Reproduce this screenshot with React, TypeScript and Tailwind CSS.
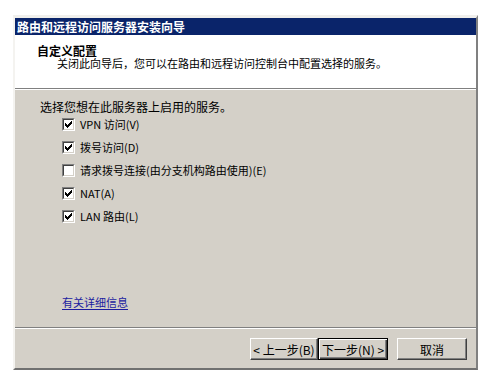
import React from "react";

const FONT = { fontFamily: '"Noto Sans CJK SC", "Noto Sans", sans-serif' };

function Check({ checked }: { checked: boolean }) {
  const cols = [2, 3, 4, 3, 2, 1, 0];
  return (
    <div className="w-[13px] h-[13px] shrink-0 border border-t-[#808080] border-l-[#808080] border-r-white border-b-white">
      <div className="w-[11px] h-[11px] border border-t-[#404040] border-l-[#404040] border-r-[#d4d0c8] border-b-[#d4d0c8] bg-white">
        {checked && (
          <svg width="9" height="9" viewBox="0 0 9 9" shapeRendering="crispEdges" className="block">
            {cols.map((y, i) => (
              <rect key={i} x={i + 1} y={y + 1} width={1} height={3} fill="#000" />
            ))}
          </svg>
        )}
      </div>
    </div>
  );
}

function Row({ checked, label }: { checked: boolean; label: string }) {
  return (
    <div className="h-[23px] flex items-center gap-[5px] pl-[47px]">
      <Check checked={checked} />
      <span className="text-[11px] leading-[13px] text-black whitespace-nowrap">{label}</span>
    </div>
  );
}

export default function App() {
  return (
    <div className="w-[500px] h-[388px] bg-white overflow-hidden pt-[15px]" style={FONT}>
      <div className="ml-[13px] w-[465px] h-[355px] flex flex-col border-l-2 border-t-[3px] border-r-2 border-b-2 border-l-[#f4f3f0] border-t-[#f0efec] border-r-[#808080] border-b-[#707070] bg-[#d4d0c8]">
        <div className="h-[17px] shrink-0 bg-[#0a246a] flex items-center pl-[2px]">
          <span className="text-white font-bold text-[12px] leading-[13px] whitespace-nowrap">路由和远程访问服务器安装向导</span>
        </div>
        <div className="h-[53px] shrink-0 bg-white pt-[9px] flex flex-col">
          <div className="pl-[22px] h-[13px] flex items-center text-[12px] font-bold text-black">自定义配置</div>
          <div className="pl-[42px] h-[13px] flex items-center text-[11px] text-black whitespace-nowrap">
            关闭此向导后，您可以在路由和远程访问控制台中配置选择的服务。
          </div>
        </div>
        <div className="h-px bg-[#808080] shrink-0" />
        <div className="h-px bg-white shrink-0" />
        <div className="h-[237px] shrink-0 pt-[11px]">
          <div className="pl-[25px] text-[12px] leading-[12px] text-black whitespace-nowrap">
            选择您想在此服务器上启用的服务。
          </div>
          <Row checked label="VPN 访问(V)" />
          <Row checked label="拨号访问(D)" />
          <Row checked={false} label="请求拨号连接(由分支机构路由使用)(E)" />
          <Row checked label="NAT(A)" />
          <Row checked label="LAN 路由(L)" />
          <div className="mt-[60px] pl-[47px]">
            <span className="text-[11px] leading-[14px] text-[#1c1ca0] underline underline-offset-2">有关详细信息</span>
          </div>
        </div>
        <div className="h-px bg-[#808080] shrink-0" />
        <div className="h-px bg-white shrink-0" />
        <div className="flex-1 flex items-start justify-end pt-[9px] pr-[9px]">
          <button className="w-[68px] h-[22px] flex items-center justify-center text-[12px] leading-[13px] text-black bg-[#d4d0c8] border border-t-white border-l-white border-r-[#404040] border-b-[#404040] shadow-[inset_-1px_-1px_0_#808080]">
            &lt; 上一步(B)
          </button>
          <button className="w-[70px] h-[22px] flex items-center justify-center text-[12px] leading-[13px] text-black bg-[#d4d0c8] border border-black shadow-[inset_1px_1px_0_#ffffff,inset_-1px_-1px_0_#404040,inset_-2px_-2px_0_#808080]">
            下一步(N) &gt;
          </button>
          <button className="ml-[9px] w-[70px] h-[22px] flex items-center justify-center text-[12px] leading-[13px] text-black bg-[#d4d0c8] border border-t-white border-l-white border-r-[#404040] border-b-[#404040] shadow-[inset_-1px_-1px_0_#808080]">
            取消
          </button>
        </div>
      </div>
    </div>
  );
}
